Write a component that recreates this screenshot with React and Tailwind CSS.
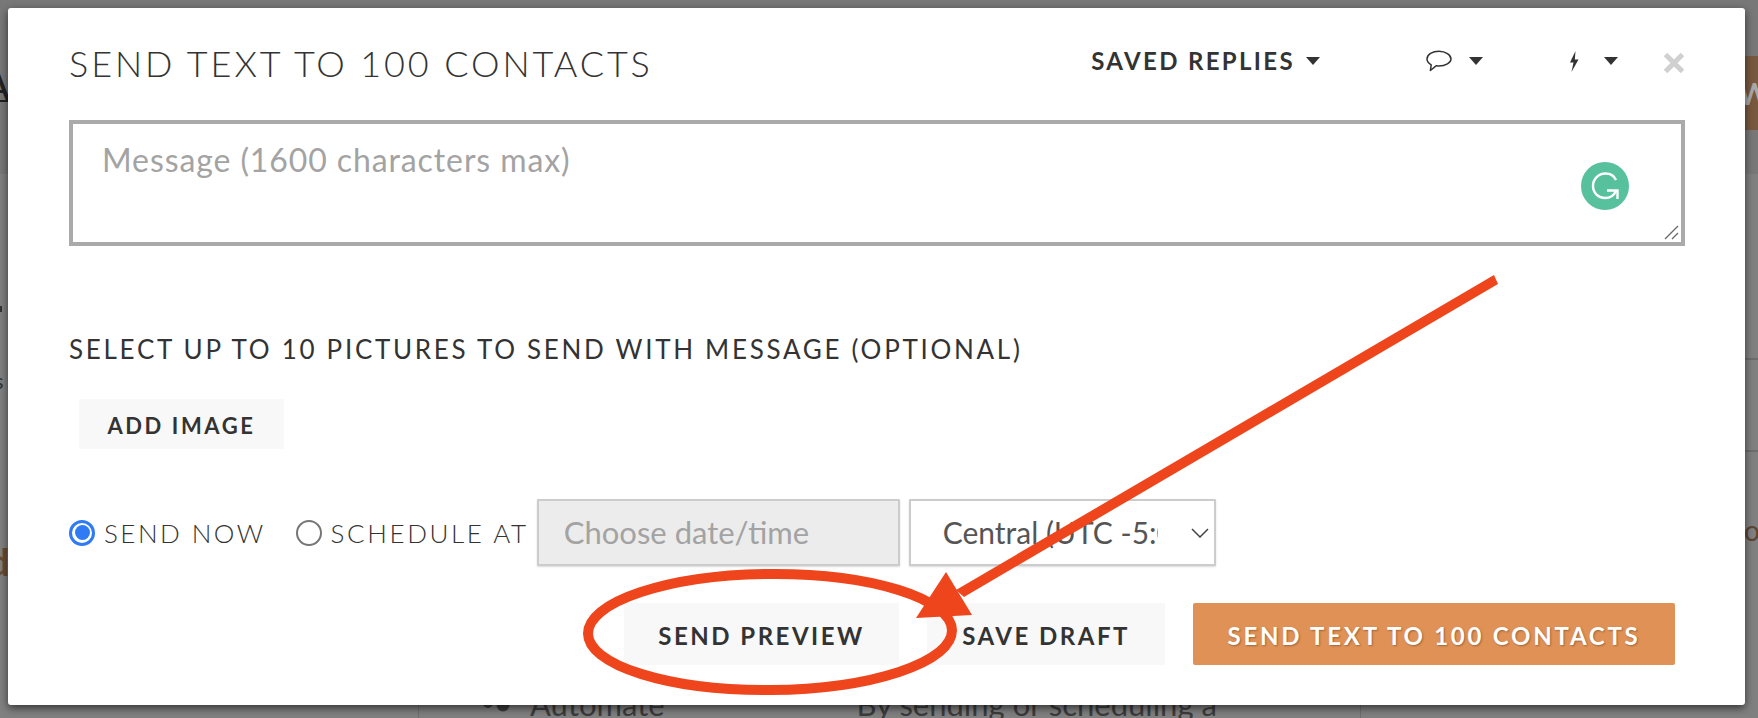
const FONT = { fontFamily: "Lato, 'Noto Sans', sans-serif" };

function Caret({ className = "" }) {
  return (
    <svg width="14" height="8" viewBox="0 0 14 8" className={className}>
      <path d="M0 0H14L7 8Z" fill="#333" />
    </svg>
  );
}

function Annotation() {
  return (
    <svg width="1758" height="718" viewBox="0 0 1758 718" className="absolute left-0 top-0 pointer-events-none">
      <ellipse cx="770" cy="632" rx="182" ry="58" fill="none" stroke="#ee451d" strokeWidth="10" transform="rotate(-0.5 770 632)" />
      <path d="M1494 275L1498 284L964 597L956 590Z" fill="#ee451d" />
      <path d="M946 572L972 615L916 618Z" fill="#ee451d" />
    </svg>
  );
}

export default function App() {
  return (
    <div style={FONT} className="relative h-[718px] w-[1758px] overflow-hidden bg-[#808080] text-[#333]">
      {/* dimmed page behind the dialog */}
      <div className="flex h-[174px] items-start justify-between bg-[#787878]">
        <div className="mt-[62px] h-[40px] w-[10px] overflow-hidden border-b-2 border-[#222] text-[42px] leading-[46px] text-[#222]">
          <span className="ml-[-18px]">A</span>
        </div>
        <div className="mt-[56px] flex h-[74px] w-[30px] items-center justify-end overflow-hidden bg-[#78593f] text-[30px] text-[#a9a9a9]">
          <span className="mr-[-12px] font-bold">W</span>
        </div>
      </div>
      <div className="absolute left-0 top-[306px] h-[6px] w-[2px] bg-[#333]" />
      <div className="absolute left-[-6px] top-[364px] text-[22px] text-[#333]">s</div>
      <div className="absolute left-[-12px] top-[541px] text-[38px] font-bold leading-[40px] text-[#694c34]">d</div>
      <div className="absolute left-[1745px] top-[358px] h-[94px] w-[13px] border-y-2 border-[#6d6d6d]" />
      <div className="absolute left-[1744px] top-[512px] text-[28px] leading-[36px] text-[#5d4530]">o</div>
      <div className="absolute left-[418px] top-[690px] flex h-[28px] w-[943px] items-start border-x border-[#6f6f6f] text-[31px] leading-[31px] text-[#3c3c3c]">
        <svg width="30" height="30" viewBox="0 0 30 30" className="ml-[61px] mt-[-3px]" fill="#3c3c3c">
          <circle cx="8" cy="16" r="5" />
          <circle cx="23" cy="18" r="6.5" />
        </svg>
        <span className="ml-[20px] mt-[-1px]">Automate</span>
        <span className="ml-[192px] mt-[-1px]">By sending or scheduling a</span>
      </div>

      {/* dialog */}
      <div className="absolute left-[8px] top-[8px] flex h-[697px] w-[1737px] flex-col rounded-[3px] bg-white pl-[61px] pr-[60px] shadow-[0_3px_9px_rgba(0,0,0,0.6)]">
        <header className="flex h-[112px] items-start justify-between">
          <h1 className="mt-[34px] text-[36px] font-light leading-[42px] tracking-[2.9px] text-[#333]">SEND TEXT TO 100 CONTACTS</h1>
          <div className="flex items-center pt-[38px]">
            <span className="text-[24px] font-bold leading-[30px] tracking-[2.35px] text-[#333]">SAVED REPLIES</span>
            <Caret className="ml-[11px]" />
            <svg width="26" height="22" viewBox="0 0 26 22" className="ml-[106px]" fill="none">
              <path d="M13 1.2C6.5 1.2 1 4.7 1 9c0 2.4 1.7 4.4 4.2 5.8L4.4 20.5l6-4.8c.9.1 1.7.2 2.6.2 6.5 0 12-3.3 12-7S19.5 1.2 13 1.2Z" stroke="#333" strokeWidth="1.5" strokeLinejoin="round" />
            </svg>
            <Caret className="ml-[17px]" />
            <svg width="10" height="21" viewBox="0 0 10 21" className="ml-[86px]">
              <path d="M6.5 0L1 11.5H4.5L2.5 21L9.5 8.5H5.8Z" fill="#333" />
            </svg>
            <Caret className="ml-[25px]" />
            <svg width="22" height="22" viewBox="0 0 22 22" className="ml-[45px] mt-[4px]">
              <path d="M2.5 2.5L19.5 19.5M19.5 2.5L2.5 19.5" stroke="#d0d0d0" strokeWidth="5" />
            </svg>
          </div>
        </header>

        <div className="relative h-[126px] border-4 border-[#aaa] pl-[29px] pt-[17px] text-[32px] leading-[38px] tracking-[0.9px] text-[#a3a3a3]">
          Message (1600 characters max)
          <div className="absolute right-[52px] top-[38px] flex h-[48px] w-[48px] items-center justify-center rounded-full bg-[#57c09c]">
            <svg width="30" height="30" viewBox="0 0 30 30" fill="none">
              <path d="M26 9C24 4.5 20 2.5 15.5 2.5C8.5 2.5 3 8 3 15C3 22 8.5 27 15 27C20 27 24 24.5 26 20" stroke="#fff" strokeWidth="2.4" />
              <path d="M17 19.5H27.5V28" stroke="#fff" strokeWidth="2.4" />
            </svg>
          </div>
          <svg width="15" height="15" viewBox="0 0 15 15" className="absolute bottom-[2px] right-[2px]" fill="none">
            <path d="M1 14L14 1M8 14L14 8" stroke="#666" strokeWidth="1.3" />
          </svg>
        </div>

        <div className="mt-[88px] text-[26px] font-normal leading-[30px] tracking-[2.7px] text-[#333]">
          SELECT UP TO 10 PICTURES TO SEND WITH MESSAGE (OPTIONAL)
        </div>

        <div className="ml-[10px] mt-[35px] flex h-[50px] w-[205px] items-center justify-center bg-[#f8f8f8] pt-[3px] text-[22px] font-bold tracking-[2.6px] text-[#333]">
          ADD IMAGE
        </div>

        <div className="mt-[50px] flex h-[67px] items-center">
          <span className="flex h-[26px] w-[26px] items-center justify-center rounded-full border-[3px] border-[#2f7bf6] bg-white">
            <span className="h-[15px] w-[15px] rounded-full bg-[#2f7bf6]" />
          </span>
          <span className="ml-[9px] pt-[2px] text-[26px] font-light tracking-[2.45px] text-[#333]">SEND NOW</span>
          <span className="ml-[30px] h-[26px] w-[26px] rounded-full border-2 border-[#767676] bg-white" />
          <span className="ml-[9px] pt-[2px] text-[26px] font-light tracking-[2.6px] text-[#333]">SCHEDULE AT</span>
          <div className="ml-[8px] flex h-[67px] w-[363px] items-center rounded-[1px] border-2 border-[#ccc] bg-[#ececec] pl-[25px] text-[31px] text-[#a3a3a3] shadow-[0_1px_2px_rgba(0,0,0,0.15)]">
            Choose date/time
          </div>
          <div className="ml-[9px] flex h-[67px] w-[307px] items-center rounded-[1px] border-2 border-[#ccc] bg-white pl-[32px] text-[30px] text-[#555] shadow-[0_1px_2px_rgba(0,0,0,0.15)]">
            <span className="w-[215px] overflow-hidden whitespace-nowrap">Central (UTC -5:00)</span>
            <svg width="18" height="10" viewBox="0 0 18 10" className="ml-[33px]" fill="none">
              <path d="M1 1L9 9L17 1" stroke="#444" strokeWidth="1.5" />
            </svg>
          </div>
        </div>

        <div className="mr-[10px] mt-[37px] flex h-[62px] justify-end gap-[28px] text-[24px] font-bold tracking-[2.5px]">
          <div className="flex w-[275px] items-center justify-center bg-[#f8f8f8] pt-[3px] text-[#333]">SEND PREVIEW</div>
          <div className="flex w-[238px] items-center justify-center bg-[#f8f8f8] pt-[3px] text-[#333]">SAVE DRAFT</div>
          <div className="flex w-[482px] items-center justify-center rounded-[2px] bg-[#e09155] pt-[3px] tracking-[2.75px] text-white [text-shadow:1px_1px_2px_rgba(0,0,0,0.3)]">SEND TEXT TO 100 CONTACTS</div>
        </div>
      </div>

      <Annotation />
    </div>
  );
}
